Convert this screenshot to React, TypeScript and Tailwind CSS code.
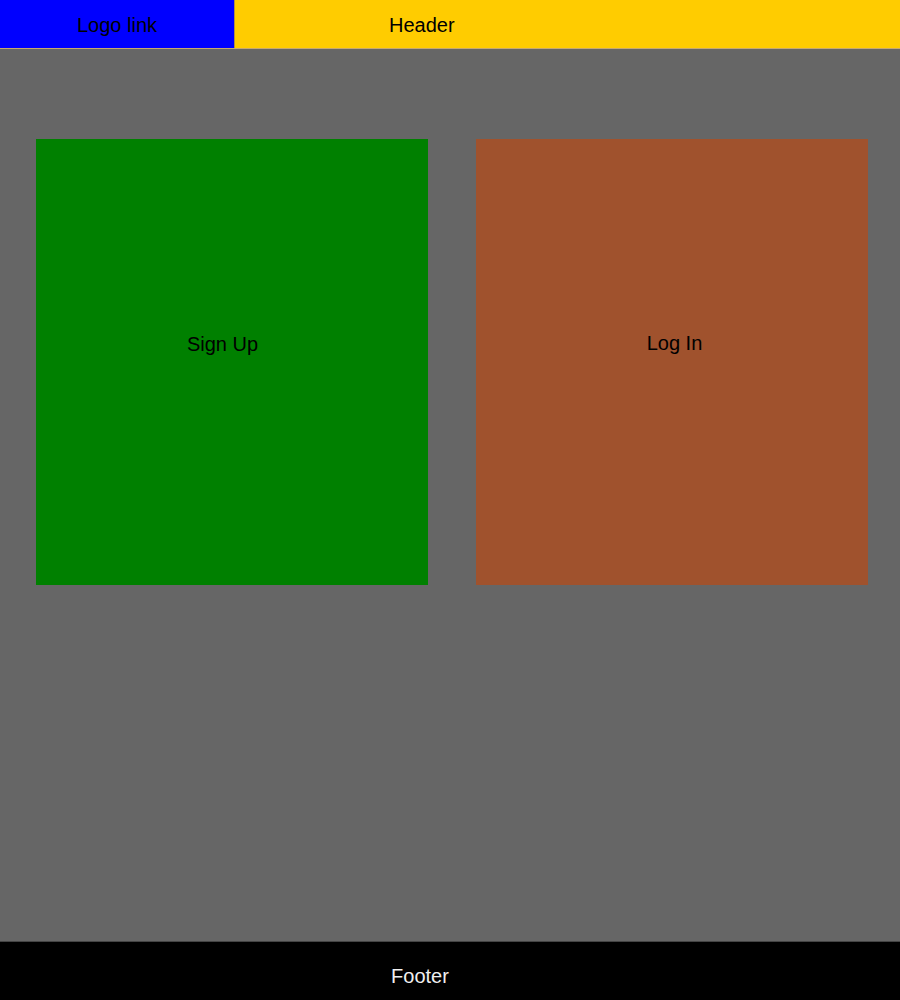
export default function App() {
  return (
    <div className="flex min-h-screen flex-col bg-[#666666] font-['Liberation_Sans',Arial,sans-serif] text-[20px] text-black">
      {/* Header */}
      <header className="flex h-[49px] border-b border-[#c8aa6e] bg-[#ffcc00]">
        <a href="#" className="flex w-[235px] items-center justify-center border-r border-[#b09040] bg-[#0000ff] pt-px text-black">
          Logo link
        </a>
        <div className="flex items-center pl-[154px] pt-px">Header</div>
      </header>

      {/* Main */}
      <main className="flex flex-1 items-start gap-[48px] pl-[36px] pr-[32px] pt-[90px]">
        <div className="flex h-[446px] w-[392px] items-center justify-center bg-[#008000] pb-[36px] pr-[19px]">
          Sign Up
        </div>
        <div className="flex h-[446px] w-[392px] items-center justify-center bg-[#a0522d] pb-[38px] pl-[5px]">
          Log In
        </div>
      </main>

      {/* Footer */}
      <footer className="flex h-[59px] items-center justify-center border-t border-[#444444] bg-black pr-[60px] pt-[9px] text-[#f0f0f0]">
        Footer
      </footer>
    </div>
  );
}
